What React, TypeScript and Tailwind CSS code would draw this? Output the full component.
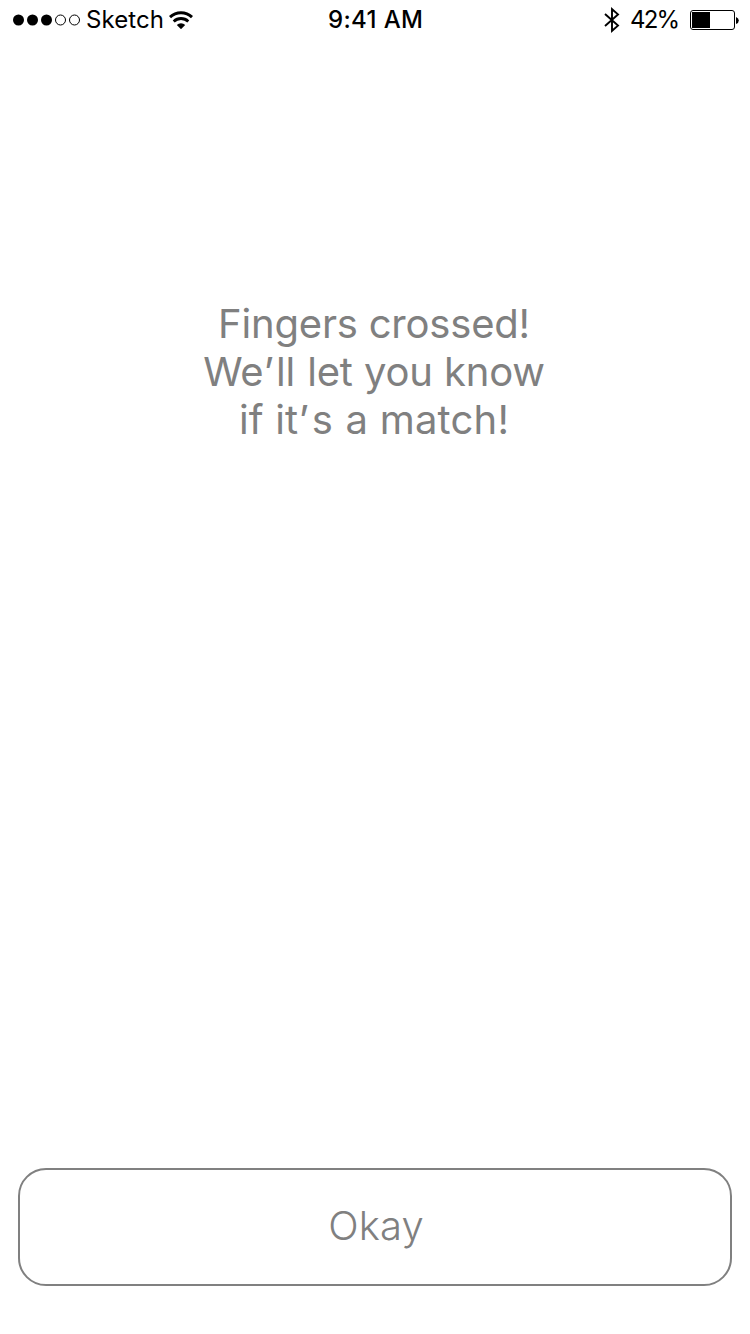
function SignalDots() {
  return (
    <svg className="ml-[12px] h-[14px] w-[69px]" viewBox="0 0 69 14">
      <circle cx="6.5" cy="7" r="5.5" fill="#000" />
      <circle cx="20.5" cy="7" r="5.5" fill="#000" />
      <circle cx="34.5" cy="7" r="5.5" fill="#000" />
      <circle cx="48.5" cy="7" r="5" fill="none" stroke="#000" />
      <circle cx="62.5" cy="7" r="5" fill="none" stroke="#000" />
    </svg>
  );
}

function WifiIcon() {
  return (
    <svg className="ml-[5px] h-[18px] w-[24px]" viewBox="0 0 24 18" fill="none" stroke="#000">
      <path d="M1 6.1 A16 16 0 0 1 23 6.1" strokeWidth="3" />
      <path d="M4.7 10.4 A10.6 10.6 0 0 1 19.3 10.4" strokeWidth="2.8" />
      <path d="M12 18.2 L7.8 14 A6 6 0 0 1 16.2 14 Z" fill="#000" stroke="none" />
    </svg>
  );
}

function BluetoothIcon() {
  return (
    <svg className="ml-px h-[26px] w-[16px]" viewBox="0 0 16 26" fill="none" stroke="#000" strokeWidth="1.9">
      <path d="M1 7 L14 18.6 L8 23.8 V2.2 L14 7.4 L1 19" />
    </svg>
  );
}

function BatteryIcon() {
  return (
    <svg className="h-[20px] w-[49px]" viewBox="0 0 49 20">
      <rect x="0.5" y="0.5" width="44" height="19" rx="2.5" fill="none" stroke="#000" />
      <rect x="2" y="2" width="18" height="16" fill="#000" />
      <path d="M46 7 Q48.8 8 48.8 10.5 Q48.8 13 46 14 Z" fill="#000" />
    </svg>
  );
}

export default function App() {
  return (
    <div className="flex h-[1334px] w-[750px] flex-col bg-white font-['Inter',sans-serif]">
      <header className="grid h-[40px] grid-cols-[328px_1fr_147px] items-center text-[24px] leading-[40px] text-black">
        <div className="flex items-center">
          <SignalDots />
          <span className="ml-[5px] w-[78px] whitespace-nowrap tracking-[0.1px]">Sketch</span>
          <WifiIcon />
        </div>
        <span className="whitespace-nowrap font-medium tracking-[0.35px]">9:41 AM</span>
        <div className="flex items-center">
          <BluetoothIcon />
          <span className="ml-[10px] w-[60px] whitespace-nowrap tracking-[-1.8px]">42%</span>
          <BatteryIcon />
        </div>
      </header>
      <main className="mt-[260px] flex grow flex-col items-center pr-[2px] text-[40px] leading-[48px] text-[#808080]">
        <p className="whitespace-nowrap tracking-[-0.2px]">Fingers crossed!</p>
        <p className="whitespace-nowrap tracking-[-0.15px]">
          We<span className="tracking-[2px]">’</span>ll <span className="ml-[1px]">let you know</span>
        </p>
        <p className="whitespace-nowrap tracking-[0.2px]">
          if it<span className="tracking-[3px]">’</span>s <span className="ml-[1px]">a match!</span>
        </p>
      </main>
      <button className="mx-[18px] mb-[48px] flex h-[118px] items-center justify-center rounded-[28px] border-2 border-[#808080] bg-white pb-[2px] pl-[2px] text-[40px] font-light leading-[48px] tracking-[0.1px] text-[#808080]">
        Okay
      </button>
    </div>
  );
}
